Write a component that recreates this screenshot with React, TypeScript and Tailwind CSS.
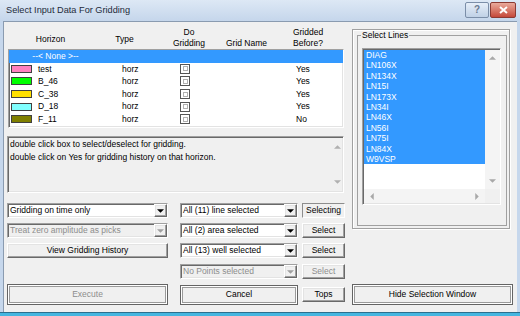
import React from 'react';

const sunken =
  'border border-t-[#a0a0a0] border-l-[#a0a0a0] border-b-white border-r-white shadow-[inset_1px_1px_0_#696969,inset_-1px_-1px_0_#e3e3e3]';
const raised =
  'border border-t-white border-l-white border-b-[#696969] border-r-[#696969] shadow-[inset_-1px_-1px_0_#a0a0a0,inset_1px_1px_0_#e3e3e3] bg-[#f0f0f0]';

const horizons = [
  { name: 'test', color: '#ff80c0', done: 'Yes' },
  { name: 'B_46', color: '#00ff00', done: 'Yes' },
  { name: 'C_38', color: '#ffe000', done: 'Yes' },
  { name: 'D_18', color: '#80ffff', done: 'Yes' },
  { name: 'F_11', color: '#808000', done: 'No' },
];

const lines = ['DIAG', 'LN106X', 'LN134X', 'LN15I', 'LN173X', 'LN34I', 'LN46X', 'LN56I', 'LN75I', 'LN84X', 'W9VSP'];

function Tri({ dir, color }: { dir: 'up' | 'down' | 'left' | 'right'; color: string }) {
  const vertical = dir === 'up' || dir === 'down';
  const pts = { down: '0,0 7,0 3.5,3.5', up: '0,3.5 7,3.5 3.5,0', left: '3.5,0 3.5,7 0,3.5', right: '0,0 0,7 3.5,3.5' }[dir];
  return (
    <svg width={vertical ? 7 : 4} height={vertical ? 4 : 7} viewBox={vertical ? '0 0 7 3.5' : '0 0 3.5 7'}>
      <polygon points={pts} fill={color} />
    </svg>
  );
}

function Combo({ text, disabled, className }: { text: string; disabled?: boolean; className: string }) {
  return (
    <div className={`flex h-[15px] ${sunken} ${disabled ? 'bg-[#f0f0f0] text-[#8d8d8d]' : 'bg-white'} ${className}`}>
      <span className="flex-1 pl-[2px] leading-[13px] whitespace-nowrap overflow-hidden">{text}</span>
      <div className={`w-[13px] flex items-center justify-center ${raised}`}>
        <Tri dir="down" color={disabled ? '#a0a0a0' : '#000'} />
      </div>
    </div>
  );
}

function Button({ text, disabled, className }: { text: string; disabled?: boolean; className: string }) {
  return (
    <div className={`flex items-center justify-center ${raised} ${disabled ? 'text-[#8d8d8d]' : ''} ${className}`}>
      {text}
    </div>
  );
}

function DefaultButton({ text, disabled, className }: { text: string; disabled?: boolean; className: string }) {
  return (
    <div className={`flex border border-[#646464] p-[1px] bg-white ${className}`}>
      <div className={`flex-1 flex items-center justify-center border border-[#9a9a9a] bg-[#f0f0f0] ${disabled ? 'text-[#8d8d8d]' : ''}`}>
        {text}
      </div>
    </div>
  );
}

export default function App() {
  return (
    <div className="w-[520px] h-[316px] flex flex-col bg-[#c6d7ec] font-['Liberation_Sans',Arial,sans-serif] text-[8.5px] text-black overflow-hidden">
      {/* Title bar */}
      <div className="h-[21px] flex items-center pl-[6px] pr-[4px] bg-gradient-to-b from-[#dde8f5] to-[#c5d6eb]">
        <span className="text-[9.2px] text-[#1e2a3a]">Select Input Data For Gridding</span>
        <div className="ml-auto flex gap-[1px] -mt-[2px]">
          <div className="w-[24px] h-[16px] flex items-center justify-center rounded-[2px] border border-[#7b8ea8] bg-gradient-to-b from-[#e6eef8] to-[#c0d1e6] text-[10px] font-bold text-[#6a7a90]">
            ?
          </div>
          <div className="w-[26px] h-[16px] flex items-center justify-center rounded-[2px] border border-[#8b3a33] bg-gradient-to-b from-[#e9a99b] to-[#c4473a]">
            <svg width="9" height="8" viewBox="0 0 9 8">
              <path d="M1 1 L8 7 M8 1 L1 7" stroke="#ffffff" strokeWidth="2" />
            </svg>
          </div>
        </div>
      </div>

      {/* Client */}
      <div className="flex-1 flex mx-[3px] border-l border-t border-[#8a9bb0] bg-[#f0f0f0]">
        {/* Left column */}
        <div className="ml-[3px] w-[338px] flex flex-col">
          {/* Header */}
          <div className="mt-[5px] h-[22px] flex leading-[11px]">
            <div className="ml-[1px] w-[85px] flex items-center justify-center pt-[2px]">Horizon</div>
            <div className="w-[63px] flex items-center justify-center pt-[2px]">Type</div>
            <div className="w-[66px] flex flex-col items-center">
              <span>Do</span>
              <span>Gridding</span>
            </div>
            <div className="w-[49px] flex items-end justify-center">Grid Name</div>
            <div className="w-[74px] flex flex-col items-center">
              <span>Gridded</span>
              <span>Before?</span>
            </div>
          </div>

          {/* Horizon list */}
          <div className={`ml-[1px] w-[336px] h-[79px] bg-white ${sunken}`}>
            <div className="h-[12.6px] bg-[#3399ff] text-white flex items-center">
              <span className="w-[93px] text-center">--&lt; None &gt;--</span>
            </div>
            {horizons.map((h) => (
              <div key={h.name} className="h-[12.6px] flex items-center pl-[2px]">
                <div className="w-[21px] h-[8px] border border-[#404040]" style={{ backgroundColor: h.color }} />
                <span className="ml-[6px] w-[84px]">{h.name}</span>
                <span className="w-[58px]">horz</span>
                <div className="w-[10px] h-[10px] border border-[#555] bg-white flex items-center justify-center">
                  <div className="w-[5px] h-[5px] border border-[#b0b0b0]" />
                </div>
                <span className="ml-[106px]">{h.done}</span>
              </div>
            ))}
          </div>

          {/* Help text */}
          <div className={`mt-[8px] w-[337px] h-[57px] flex bg-[#f0f0f0] ${sunken}`}>
            <div className="flex-1 pl-[2px] pt-[1px] leading-[12.6px]">
              <div>double click box to select/deselect for gridding.</div>
              <div>double click on Yes for gridding history on that horizon.</div>
            </div>
            <div className="w-[12px] flex flex-col items-center justify-between py-[8px]">
              <Tri dir="up" color="#b0b0b0" />
              <Tri dir="down" color="#b0b0b0" />
            </div>
          </div>

          {/* Controls */}
          <div className="mt-[10px] flex">
            <Combo text="Gridding on time only" className="w-[161px]" />
            <Combo text="All (11) line selected" className="ml-[12px] w-[118px]" />
            <div className="ml-[4px] w-[43px] h-[15px] flex items-center justify-center border border-t-[#8d8d8d] border-l-[#8d8d8d] border-b-white border-r-white">
              Selecting
            </div>
          </div>
          <div className="mt-[5px] flex">
            <Combo text="Treat zero amplitude as picks" disabled className="w-[161px]" />
            <Combo text="All (2) area selected" className="ml-[12px] w-[118px]" />
            <Button text="Select" className="ml-[4px] w-[43px] h-[15px]" />
          </div>
          <div className="mt-[5px] flex">
            <Button text="View Gridding History" className="w-[161px] h-[15px]" />
            <Combo text="All (13) well selected" className="ml-[12px] w-[118px]" />
            <Button text="Select" className="ml-[4px] w-[43px] h-[15px]" />
          </div>
          <div className="mt-[6px] flex">
            <div className="w-[161px]" />
            <Combo text="No Points selected" disabled className="ml-[12px] w-[118px]" />
            <Button text="Select" disabled className="ml-[4px] w-[43px] h-[15px]" />
          </div>
          <div className="mt-[5px] flex items-center">
            <DefaultButton text="Execute" disabled className="w-[161px] h-[21px]" />
            <DefaultButton text="Cancel" className="ml-[12px] w-[118px] h-[20px]" />
            <Button text="Tops" className="ml-[4px] w-[43px] h-[15px]" />
          </div>
        </div>

        {/* Right column */}
        <div className="ml-[7px] w-[161px] flex flex-col">
          <div className="mt-[7px] w-[158px] h-[200px] border border-[#a0a0a0] shadow-[inset_1px_1px_0_#ffffff,1px_1px_0_#ffffff]">
            <fieldset className="ml-[4px] mr-[2px] h-[196px] border border-[#a0a0a0]">
              <legend className="ml-[3px] px-[1px] leading-[10px]">Select Lines</legend>
              <div className={`mt-[8px] ml-[4px] w-[139px] h-[157px] flex flex-col bg-white ${sunken}`}>
                <div className="flex-1 flex">
                  <div className="flex-1 pt-[1px] pl-[1px]">
                    {lines.map((l) => (
                      <div key={l} className="h-[10.4px] leading-[10.4px] bg-[#3399ff] text-white pl-[2px]">
                        {l}
                      </div>
                    ))}
                  </div>
                  <div className="w-[15px] bg-[#f4f4f4] flex flex-col items-center justify-between py-[6px] mt-[1px]">
                    <Tri dir="up" color="#a8a8a8" />
                    <Tri dir="down" color="#a8a8a8" />
                  </div>
                </div>
                <div className="h-[14px] flex mb-[1px] ml-[1px]">
                  <div className="flex-1 bg-[#f4f4f4] flex items-center justify-between px-[6px]">
                    <Tri dir="left" color="#a8a8a8" />
                    <Tri dir="right" color="#a8a8a8" />
                  </div>
                  <div className="w-[15px] bg-[#f0f0f0]" />
                </div>
              </div>
            </fieldset>
          </div>
          <DefaultButton text="Hide Selection Window" className="mt-[55px] w-[161px] h-[21px]" />
        </div>
      </div>

      {/* Bottom frame */}
      <div className="h-[4px] border-t border-[#2b6f8e] bg-[#45b6e0]" />
    </div>
  );
}
